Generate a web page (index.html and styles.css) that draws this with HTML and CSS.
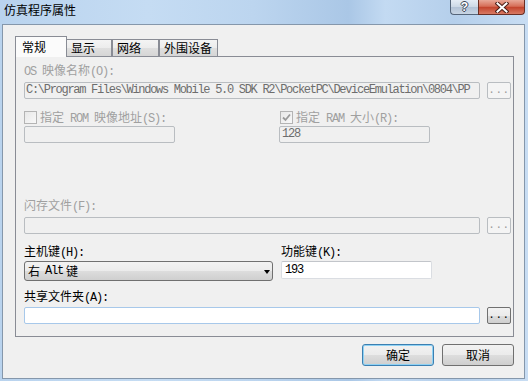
FILE: index.html
```html
<!DOCTYPE html>
<html>
<head>
<meta charset="utf-8">
<title>仿真程序属性</title>
<link rel="stylesheet" href="styles.css">
</head>
<body>
<div class="window">
  <div class="titlebar">
    <div class="title">仿真程序属性</div>
    <div class="caption-btns">
      <div class="cbtn help"><span class="q">?</span></div>
      <div class="cbtn close">
        <svg width="14" height="11" viewBox="0 0 14 11">
          <path d="M2.5 1.5 L11.5 9.5 M11.5 1.5 L2.5 9.5" stroke="#4a1e18" stroke-width="4" stroke-linecap="square" fill="none"/>
          <path d="M2.5 1.5 L11.5 9.5 M11.5 1.5 L2.5 9.5" stroke="#ffffff" stroke-width="2" stroke-linecap="square" fill="none"/>
        </svg>
      </div>
    </div>
  </div>
  <div class="client">
    <div class="tabs">
      <div class="tab active">常规</div>
      <div class="tab t2">显示</div>
      <div class="tab t3">网络</div>
      <div class="tab t4">外围设备</div>
    </div>
    <div class="panel">
      <div class="lbl dis"><span class="lat">OS </span>映像名称<span class="lat">(O):</span></div>
      <div class="row mt5">
        <div class="edit dis long path">C:\Program Files\Windows Mobile 5.0 SDK R2\PocketPC\DeviceEmulation\0804\PP</div>
        <div class="dots dis-btn">...</div>
      </div>
      <div class="row mt11">
        <div class="col-a chk">
          <span class="cb"></span>
          <span class="lbl dis">指定<span class="lat"> ROM </span>映像地址<span class="lat">(S):</span></span>
        </div>
        <div class="chk chk-b">
          <span class="cb">
            <svg width="11" height="11" viewBox="0 0 11 11"><path d="M2 5.5 L4.5 8 L9 2.5" stroke="#9a9a9a" stroke-width="1.8" fill="none"/></svg>
          </span>
          <span class="lbl dis">指定<span class="lat"> RAM </span>大小<span class="lat">(R):</span></span>
        </div>
      </div>
      <div class="row mt2">
        <div class="col-a"><div class="edit dis half"></div></div>
        <div class="edit dis half">128</div>
      </div>
      <div class="lbl dis mt55">闪存文件<span class="lat">(F):</span></div>
      <div class="row mt5">
        <div class="edit dis long"></div>
        <div class="dots dis-btn">...</div>
      </div>
      <div class="row mt10">
        <div class="col-c lbl">主机键<span class="lat">(H):</span></div>
        <div class="lbl">功能键<span class="lat">(K):</span></div>
      </div>
      <div class="row mt3 top">
        <div class="col-c">
          <div class="select"><span>右</span><span class="lat alt">Alt</span><span class="key">键</span><span class="arrow"></span></div>
        </div>
        <div class="edit white fn">193</div>
      </div>
      <div class="lbl mt8">共享文件夹<span class="lat">(A):</span></div>
      <div class="row mt4">
        <div class="edit white long focus"></div>
        <div class="dots en-btn">...</div>
      </div>
    </div>
    <div class="actions">
      <div class="btn default">确定</div>
      <div class="btn">取消</div>
    </div>
  </div>
</div>
</body>
</html>
```

FILE: styles.css
```css
* { box-sizing: border-box; }
html, body { margin: 0; padding: 0; }
body {
  width: 528px;
  height: 381px;
  overflow: hidden;
  font-family: "Noto Sans CJK SC", "Liberation Sans", sans-serif;
  font-size: 12px;
  color: #000;
  background: linear-gradient(90deg, #b9d3ee 0%, #c5dcf3 28%, #bcd5ef 48%, #aac7e6 66%, #c3daf2 73%, #b5cfeb 86%, #c8ddf3 100%);
}
.window { display: flex; flex-direction: column; height: 381px; }

.titlebar { height: 24px; display: flex; align-items: flex-start; padding-left: 4px; }
.title { line-height: 20px; font-size: 12px; }
.caption-btns { margin-left: auto; margin-right: 3px; display: flex; }
.cbtn { height: 15px; display: flex; align-items: center; justify-content: center; }
.help {
  width: 28px;
  border: 1px solid #55657a;
  border-top: none;
  border-right: none;
  border-radius: 0 0 0 4px;
  background: linear-gradient(#e4ecf5, #ccd8e6 50%, #b2c2d6 51%, #c8d5e4);
}
.q {
  font-family: "Liberation Sans", sans-serif;
  font-weight: bold;
  font-size: 12px;
  line-height: 12px;
  color: #fff;
  text-shadow: 1px 0 0 #3a4656, -1px 0 0 #3a4656, 0 1px 0 #3a4656, 0 -1px 0 #3a4656;
}
.close {
  width: 47px;
  border: 1px solid #6a2e24;
  border-top: none;
  border-radius: 0 0 4px 0;
  background: linear-gradient(#e8a898, #d66e58 45%, #c3442d 52%, #d87a64);
}

.client {
  flex: 1;
  margin: 0 3px 2px 2px;
  border: 1px solid #8597ab;
  background: #f0f0f0;
  padding: 11px 0 0 12px;
  display: flex;
  flex-direction: column;
}

.tabs { display: flex; align-items: flex-end; height: 20px; }
.tab {
  height: 17px;
  border: 1px solid #898c95;
  border-bottom: none;
  background: linear-gradient(#f4f4f4, #ececec 50%, #dfdfdf 51%, #d6d6d6);
  line-height: 16px;
  padding-left: 4px;
  white-space: nowrap;
}
.tab.active {
  height: 21px;
  width: 52px;
  margin-bottom: -1px;
  background: #fbfbfb;
  padding-left: 6px;
  line-height: 19px;
  position: relative;
  z-index: 1;
}
.t2 { width: 46px; margin-left: -1px; }
.t3 { width: 47px; }
.t4 { width: 59px; }

.panel {
  width: 499px;
  height: 281px;
  border: 1px solid #898c95;
  background: #f0f0f0;
  padding: 6px 0 0 8px;
  display: flex;
  flex-direction: column;
}

.lbl { height: 14px; line-height: 14px; white-space: nowrap; }
.dis { color: #a0a0a0; }
.lat {
  font-family: "Liberation Mono", monospace;
  font-size: 12px;
  letter-spacing: -1.2px;
  white-space: pre;
}

.row { display: flex; align-items: center; }
.row.top { align-items: flex-start; }
.mt2 { margin-top: 2px; }
.mt3 { margin-top: 3px; }
.mt4 { margin-top: 4px; }
.mt5 { margin-top: 5px; }
.mt8 { margin-top: 8px; }
.mt10 { margin-top: 10px; }
.mt11 { margin-top: 11px; }
.mt55 { margin-top: 55px; }

.col-a { width: 255px; flex: none; }
.col-c { width: 257px; flex: none; }

.chk { display: flex; align-items: center; height: 14px; }
.chk-b { margin-left: 1px; }
.cb {
  width: 13px;
  height: 13px;
  flex: none;
  border: 1px solid #b4b4b4;
  background: linear-gradient(135deg, #e8e8e8, #f8f8f8);
  margin-right: 3px;
  display: flex;
  align-items: center;
  justify-content: center;
}

.edit {
  height: 17px;
  border: 1px solid #b9bdc1;
  border-radius: 2px;
  background: #f0f0f0;
  padding: 0 2px;
  line-height: 15px;
  overflow: hidden;
  white-space: nowrap;
  font-family: "Liberation Mono", monospace;
  font-size: 12px;
  letter-spacing: -1.2px;
  color: #6d6d6d;
  flex: none;
}
.edit.path { letter-spacing: -1.29px; padding-left: 1px; }
.edit.white {
  background: #fff;
  color: #000;
  border-color: #dadde2;
  border-top-color: #c2c5ca;
}
.edit.focus { border-color: #a7c8ea; }
.long { width: 456px; }
.half { width: 151px; }
.fn { width: 151px; height: 18px; line-height: 16px; padding-left: 3px; }

.dots {
  width: 24px;
  height: 17px;
  margin-left: 7px;
  border-radius: 2px;
  text-align: center;
  font-family: "Liberation Mono", monospace;
  font-size: 11px;
  line-height: 14px;
  letter-spacing: 0.5px;
}
.dis-btn { border: 1px solid #b9bdc1; background: #f4f4f4; color: #9a9a9a; }
.en-btn {
  border: 1px solid #707070;
  background: linear-gradient(#f2f2f2, #ebebeb 50%, #dddddd 51%, #cfcfcf);
  color: #000;
}

.select {
  width: 249px;
  height: 20px;
  border: 1px solid #707070;
  border-radius: 3px;
  background: linear-gradient(#f2f2f2, #ebebeb 50%, #dddddd 51%, #cfcfcf);
  display: flex;
  align-items: center;
  padding-left: 3px;
  line-height: 18px;
}
.alt { margin-left: 5px; }
.key { margin-left: 3px; }
.arrow {
  margin-left: auto;
  margin-right: 2px;
  width: 0;
  height: 0;
  border-left: 3.5px solid transparent;
  border-right: 3.5px solid transparent;
  border-top: 4px solid #000;
  margin-top: 2px;
}

.actions {
  width: 499px;
  display: flex;
  justify-content: flex-end;
  gap: 8px;
  margin-top: 7px;
}
.btn {
  width: 72px;
  height: 22px;
  border: 1px solid #707070;
  border-radius: 3px;
  background: linear-gradient(#f2f2f2, #ebebeb 50%, #dddddd 51%, #cfcfcf);
  text-align: center;
  line-height: 20px;
}
.btn.default {
  border-color: #3c7fb1;
  box-shadow: inset 0 0 0 1px #8fd2f4;
}
```
